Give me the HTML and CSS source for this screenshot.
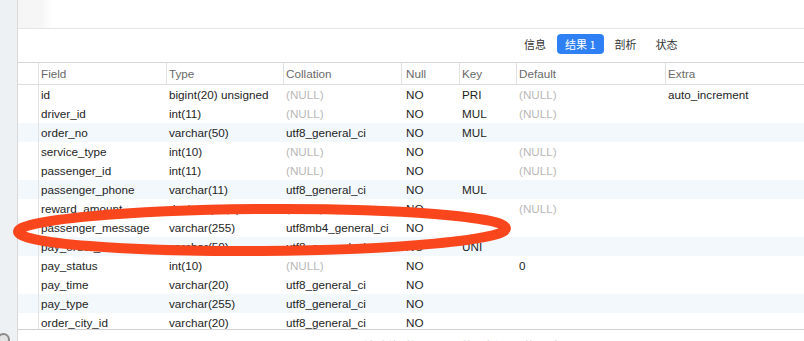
FILE: index.html
```html
<!DOCTYPE html>
<html lang="zh">
<head>
<meta charset="utf-8">
<title>Table structure</title>
<link rel="stylesheet" href="styles.css">
</head>
<body>
<div class="app">
  <aside class="sidebar"><span class="side-icon"></span></aside>
  <div class="main">
    <div class="editor"><div class="gutter"></div></div>
    <div class="tabs">
      <span class="tab">信息</span>
      <span class="tab active">结果 1</span>
      <span class="tab">剖析</span>
      <span class="tab">状态</span>
    </div>
    <div class="grid">
      <div class="row head">
        <div class="c idx"></div><div class="c">Field</div><div class="c">Type</div><div class="c">Collation</div><div class="c nul">Null</div><div class="c">Key</div><div class="c">Default</div><div class="c">Extra</div>
      </div>
      <div class="row">
        <div class="c idx"></div><div class="c">id</div><div class="c">bigint(20) unsigned</div><div class="c null">(NULL)</div><div class="c nul">NO</div><div class="c">PRI</div><div class="c null">(NULL)</div><div class="c">auto_increment</div>
      </div>
      <div class="row">
        <div class="c idx"></div><div class="c">driver_id</div><div class="c">int(11)</div><div class="c null">(NULL)</div><div class="c nul">NO</div><div class="c">MUL</div><div class="c null">(NULL)</div><div class="c"></div>
      </div>
      <div class="row alt">
        <div class="c idx"></div><div class="c">order_no</div><div class="c">varchar(50)</div><div class="c">utf8_general_ci</div><div class="c nul">NO</div><div class="c">MUL</div><div class="c"></div><div class="c"></div>
      </div>
      <div class="row">
        <div class="c idx"></div><div class="c">service_type</div><div class="c">int(10)</div><div class="c null">(NULL)</div><div class="c nul">NO</div><div class="c"></div><div class="c null">(NULL)</div><div class="c"></div>
      </div>
      <div class="row">
        <div class="c idx"></div><div class="c">passenger_id</div><div class="c">int(11)</div><div class="c null">(NULL)</div><div class="c nul">NO</div><div class="c"></div><div class="c null">(NULL)</div><div class="c"></div>
      </div>
      <div class="row alt">
        <div class="c idx"></div><div class="c">passenger_phone</div><div class="c">varchar(11)</div><div class="c">utf8_general_ci</div><div class="c nul">NO</div><div class="c">MUL</div><div class="c"></div><div class="c"></div>
      </div>
      <div class="row">
        <div class="c idx"></div><div class="c">reward_amount</div><div class="c">decimal(20,2)</div><div class="c null">(NULL)</div><div class="c nul">NO</div><div class="c"></div><div class="c null">(NULL)</div><div class="c"></div>
      </div>
      <div class="row">
        <div class="c idx"></div><div class="c">passenger_message</div><div class="c">varchar(255)</div><div class="c">utf8mb4_general_ci</div><div class="c nul">NO</div><div class="c"></div><div class="c"></div><div class="c"></div>
      </div>
      <div class="row alt">
        <div class="c idx"></div><div class="c">pay_order_no</div><div class="c">varchar(50)</div><div class="c">utf8_general_ci</div><div class="c nul">NO</div><div class="c">UNI</div><div class="c"></div><div class="c"></div>
      </div>
      <div class="row">
        <div class="c idx"></div><div class="c">pay_status</div><div class="c">int(10)</div><div class="c null">(NULL)</div><div class="c nul">NO</div><div class="c"></div><div class="c">0</div><div class="c"></div>
      </div>
      <div class="row">
        <div class="c idx"></div><div class="c">pay_time</div><div class="c">varchar(20)</div><div class="c">utf8_general_ci</div><div class="c nul">NO</div><div class="c"></div><div class="c"></div><div class="c"></div>
      </div>
      <div class="row alt">
        <div class="c idx"></div><div class="c">pay_type</div><div class="c">varchar(255)</div><div class="c">utf8_general_ci</div><div class="c nul">NO</div><div class="c"></div><div class="c"></div><div class="c"></div>
      </div>
      <div class="row">
        <div class="c idx"></div><div class="c">order_city_id</div><div class="c">varchar(20)</div><div class="c">utf8_general_ci</div><div class="c nul">NO</div><div class="c"></div><div class="c"></div><div class="c"></div>
      </div>
    </div>
    <div class="status"><span class="status-text">只读 查询时间: 0.021s 第 1 条记录 (共 20 条)</span></div>
  </div>
  <svg class="mark" width="804" height="341" viewBox="0 0 804 341" aria-hidden="true">
    <ellipse cx="262" cy="230" rx="244" ry="21" fill="none" stroke="#f9461c" stroke-width="10" transform="rotate(-0.4 262 230)"/>
  </svg>
</div>
</body>
</html>
```

FILE: styles.css
```css
html, body {
  margin: 0;
  padding: 0;
}

body {
  width: 804px;
  height: 341px;
  overflow: hidden;
  background: #ffffff;
  font-family: "Liberation Sans", Arial, sans-serif;
}

.app {
  position: relative;
  display: flex;
  height: 341px;
}

.sidebar {
  width: 17px;
  flex: none;
  background: #eef1f4;
  border-right: 1px solid #d9d9d9;
  display: flex;
  flex-direction: column;
  overflow: hidden;
}

.side-icon {
  margin-top: auto;
  margin-left: -3px;
  margin-bottom: -5px;
  width: 9px;
  height: 9px;
  border: 2px solid #8c8c8c;
  border-radius: 50%;
  background: #e4e4e4;
}

.main {
  flex: 1;
  min-width: 0;
  display: flex;
  flex-direction: column;
}

.editor {
  height: 28px;
  flex: none;
  border-bottom: 1px solid #e6e6e6;
  display: flex;
}

.gutter {
  width: 34px;
  background: linear-gradient(to right, #f5f5f5, #f6f6f6 70%, #ffffff);
}

.tabs {
  height: 34px;
  flex: none;
  box-sizing: border-box;
  border-bottom: 1px solid #d6d6d6;
  display: flex;
  align-items: flex-start;
  gap: 3px;
  padding-left: 498px;
  padding-top: 5px;
  font-family: "Noto Sans CJK SC", "Liberation Sans", sans-serif;
  font-size: 11px;
}

.tab {
  height: 20px;
  line-height: 20px;
  padding: 0 8px;
  color: #333333;
  border-radius: 4px;
}

.tab.active {
  background: #2f7ff5;
  color: #ffffff;
}

.grid {
  height: 266px;
  flex: none;
  overflow: hidden;
  font-size: 11.7px;
}

.row {
  display: grid;
  grid-template-columns: 21px 128px 117px 118px 58px 57px 149px 1fr;
  height: 19px;
  line-height: 19px;
  color: #1e1e1e;
}

.row.alt {
  background: #f3f8fd;
}

.row.head {
  height: 22px;
  line-height: 21px;
  box-sizing: border-box;
  border-bottom: 1px solid #dedede;
  color: #6a6a6a;
}

.c {
  box-sizing: border-box;
  padding-left: 2px;
  white-space: nowrap;
  overflow: hidden;
}

.c.nul {
  padding-left: 4px;
}

.idx {
  border-right: 1px solid #e2e2e2;
}

.head .c {
  border-right: 1px solid #e2e2e2;
}

.head .c:last-child {
  border-right: none;
}

.null {
  color: #b9b9b9;
}

.status {
  flex: 1;
  border-top: 1px solid #d2d2d2;
  overflow: hidden;
  padding-left: 335px;
  padding-top: 8px;
  font-family: "Noto Sans CJK SC", "Liberation Sans", sans-serif;
  font-size: 11px;
  line-height: 14px;
  color: #cfcfcf;
  white-space: nowrap;
}

.mark {
  position: absolute;
  left: 0;
  top: 0;
  pointer-events: none;
}
```
